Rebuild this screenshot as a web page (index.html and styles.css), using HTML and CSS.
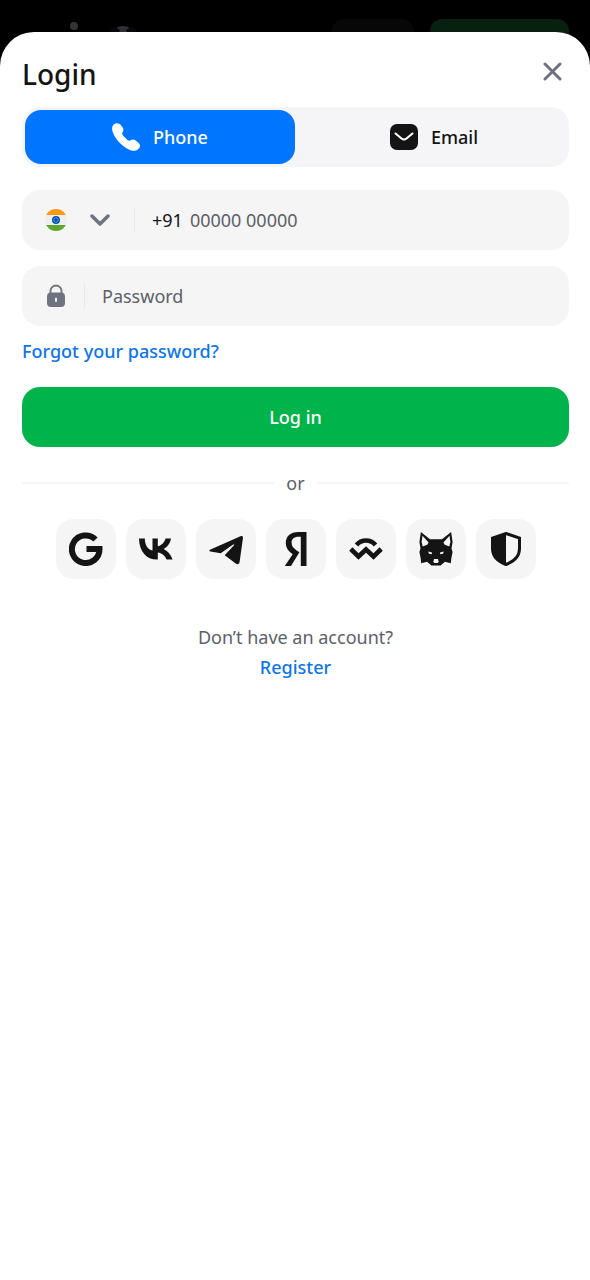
FILE: index.html
```html
<!DOCTYPE html>
<html lang="en">
<head>
<meta charset="utf-8">
<meta name="viewport" content="width=device-width, initial-scale=1">
<title>Login</title>
<link rel="stylesheet" href="styles.css">
</head>
<body>
<div class="topbar" aria-hidden="true">
  <svg class="topbar-logo" width="70" height="34" viewBox="0 0 70 34">
    <circle cx="4" cy="7" r="4" fill="#343434"/>
    <circle cx="53" cy="20" r="13" fill="#303030"/>
    <path d="M40 10l5-2 5 3-2 4h-8zM66 10l-5-2-5 3 2 4h8z" fill="#08080c"/>
  </svg>
  <span class="ghost ghost-dark"></span>
  <span class="ghost ghost-green"></span>
</div>
<main class="sheet">
  <header class="header">
    <h1 class="title">Login</h1>
    <button class="close" type="button" aria-label="Close">
      <svg width="20" height="20" viewBox="0 0 20 20"><path d="M3 3l15 15M18 3L3 18" fill="none" stroke="#6f7380" stroke-width="3" stroke-linecap="round"/></svg>
    </button>
  </header>

  <div class="tabs" role="tablist">
    <button class="tab tab-active" type="button" role="tab" aria-selected="true">
      <svg width="28" height="28" viewBox="0 0 28 28"><path d="M2 1.200C4-.6 7.200 0 8.800 2L10.600 4.600C11.800 6.200 11.600 8 10.500 9.600C9.800 10.600 10.200 11.400 11 12.400L15.500 17C16.500 17.900 17.400 18 18.400 17.400C20 16.300 21.800 16.200 23.300 17.200L26.200 19.400C28.300 21.100 28.600 23.300 27 25.300C24.500 28.400 20.500 28.500 16.800 26.600C9.500 22.600 3.600 16.600.8 9.300C-.4 6.200-.2 3.300 2 1.200Z" fill="#fff"/></svg>
      <span>Phone</span>
    </button>
    <button class="tab" type="button" role="tab" aria-selected="false">
      <svg width="28" height="26" viewBox="0 0 28 26"><rect width="28" height="26" rx="7" fill="#141414"/><path d="M5.500 9.500L11.500 14.500Q14 16.600 16.500 14.500L22.500 9.500" fill="none" stroke="#fff" stroke-width="2" stroke-linecap="round"/></svg>
      <span>Email</span>
    </button>
  </div>

  <form class="form">
    <div class="field">
      <button class="country" type="button" aria-label="Country code: India" aria-haspopup="listbox">
        <svg width="22" height="22" viewBox="0 0 22 22">
          <clipPath id="disc"><circle cx="11" cy="11" r="11"/></clipPath>
          <g clip-path="url(#disc)"><rect width="22" height="22" fill="#eee"/><rect width="22" height="6" fill="#ff9811"/><rect y="16" width="22" height="6" fill="#60a72e"/></g>
          <circle cx="11" cy="11" r="4" fill="#0052b4"/><circle cx="11" cy="11" r="2.200" fill="none" stroke="#dfe8f4" stroke-width=".8" stroke-dasharray="1 .8"/>
        </svg>
        <svg width="20" height="12" viewBox="0 0 20 12"><path d="M2 2l8 8 8-8" fill="none" stroke="#6f7380" stroke-width="3.500" stroke-linecap="round" stroke-linejoin="round"/></svg>
      </button>
      <label class="prefix" for="phone">+91</label>
      <input class="input" id="phone" type="tel" placeholder="00000 00000" aria-label="Phone number">
    </div>
    <div class="field">
      <label class="lock" for="password" aria-label="Password">
        <svg width="20" height="24" viewBox="0 0 20 24"><path d="M4.500 11V7a5.500 5.500 0 0 1 11 0v4" fill="none" stroke="#6f7380" stroke-width="1.800"/><rect x="1" y="8.500" width="18" height="14.500" rx="4" fill="#6f7380"/><rect x="9" y="13.500" width="2" height="4.500" rx="1" fill="#f5f5f5"/></svg>
      </label>
      <input class="input input-password" id="password" type="password" placeholder="Password">
    </div>
    <a class="link forgot" href="#">Forgot your password?</a>
    <button class="submit" type="submit">Log in</button>
  </form>

  <div class="divider"><span>or</span></div>

  <div class="socials">
    <button class="social" type="button" aria-label="Google">
      <svg width="34" height="34" viewBox="0 0 34 34"><path d="M26.500 7.500A13.800 13.800 0 1 0 30.500 17H17.500" fill="none" stroke="#141414" stroke-width="6"/></svg>
    </button>
    <button class="social" type="button" aria-label="VK">
      <svg width="34" height="34" viewBox="0 0 34 34"><path d="M0 6.500H5.800C6 13.500 9 17.600 13.500 18.500V6.500H18.800V14.300C22.300 13.700 25.500 10.400 26.500 6.500H32C31.200 11.600 28.200 15 24.600 17C28.600 18.900 31.800 22.500 33.600 27.500H27.500C26 23.900 22.800 21.100 18.800 20.600V27.500H18C7.500 27.500.3 20.100 0 6.500Z" fill="#141414"/></svg>
    </button>
    <button class="social" type="button" aria-label="Telegram">
      <svg width="34" height="34" viewBox="0 0 34 34"><path d="M1.500 17.600L31.500 4.300C33.200 3.700 34.200 4.500 33.900 6.400L30.600 30C30.200 32.300 28.500 32.700 26.700 31.400L15.700 23.200L25 13.300C25.700 12.400 24.800 12.100 23.800 12.800L11.700 21.200L1.500 19.600C-.1 19.100 0 18.300 1.500 17.600Z" fill="#141414"/></svg>
    </button>
    <button class="social" type="button" aria-label="Yandex">
      <svg width="34" height="34" viewBox="0 0 34 34"><path d="M27.500 34H21.800V4.800H19.500C15 4.800 12.600 7 12.600 10.600C12.600 14.200 14.200 16.100 17.600 18.400L20.400 20.300L12 34H5.800L13.700 22.200C9.200 19 6.800 15.900 6.800 11C6.800 4.300 11.300 0 19.500 0H27.500Z" fill="#141414"/></svg>
    </button>
    <button class="social" type="button" aria-label="WalletConnect">
      <svg width="34" height="34" viewBox="0 0 34 34"><path d="M7.500 13C12.500 7 21.500 7 26.500 13M1.800 17L9.500 24.500L17 17.500L24.500 24.500L32.200 17" fill="none" stroke="#141414" stroke-width="4.600"/></svg>
    </button>
    <button class="social" type="button" aria-label="MetaMask">
      <svg width="34" height="34" viewBox="0 0 34 34"><path d="M1.900 0L11 7.300H23L32.100 0L33.600 10L32.500 16.500L33.600 20L32.300 26.500L31.800 31.300L26 29.800L21.500 33.500H12.500L8 29.800L2.200 31.300L1.700 26.500L.4 20L1.500 16.500L.4 10Z" fill="#141414"/><path d="M3.500 3.800L9.600 10.500L8.200 12.800L3.700 14.500L2.600 10ZM30.500 3.800L24.400 10.500L25.800 12.800L30.300 14.500L31.400 10ZM9.200 19.500L13 20.500L12.700 22.200L10 21.800ZM24.800 19.500L21 20.500L21.300 22.200L24 21.800ZM15 27H19L19.700 30L18.500 31H15.500L14.300 30Z" fill="#f5f5f5"/></svg>
    </button>
    <button class="social" type="button" aria-label="Secure key">
      <svg width="34" height="34" viewBox="0 0 34 34"><path d="M17 1.500L30.500 6V16.500C30.500 24 25 29.500 17 32.500C9 29.500 3.500 24 3.500 16.500V6Z" fill="none" stroke="#141414" stroke-width="3"/><path d="M17 1V33C9 29.500 3 24 3 16.500V5.500Z" fill="#141414"/></svg>
    </button>
  </div>

  <footer class="footer">
    <span>Don’t have an account?</span>
    <a class="link" href="#">Register</a>
  </footer>
</main>
</body>
</html>
```
FILE: styles.css
```css
* { box-sizing: border-box; }

body {
  margin: 0;
  min-height: 100vh;
  display: flex;
  flex-direction: column;
  background: #000;
  color: #141414;
  font: 400 18px/30px "Noto Sans", "Open Sans", sans-serif;
}

button, input {
  margin: 0;
  padding: 0;
  border: 0;
  background: none;
  color: inherit;
  font: inherit;
}

button { cursor: pointer; }
svg { display: block; flex: none; }

.topbar {
  display: flex;
  gap: 16px;
  height: 60px;
  padding: 19px 21px 0 70px;
}
.topbar-logo { margin-right: auto; }
.ghost { height: 36px; border-radius: 12px; }
.ghost-dark { width: 82px; background: #070707; }
.ghost-green { width: 139px; background: #082010; }

.sheet {
  position: relative;
  flex: 1;
  margin-top: -28px;
  padding: 20px 21px 32px 22px;
  border-radius: 34px 34px 0 0;
  background: #fff;
}

.header {
  display: flex;
  justify-content: space-between;
  align-items: flex-start;
  margin-bottom: 11px;
}
.title { margin: 0; font-size: 28px; line-height: 44px; font-weight: 500; }
.close {
  display: grid;
  place-items: center;
  width: 34px;
  height: 38px;
}

.tabs {
  display: grid;
  grid-template-columns: 1fr 1fr;
  gap: 4px;
  height: 60px;
  padding: 3px 0 3px 3px;
  border-radius: 18px;
  background: #f5f5f8;
}
.tab {
  display: flex;
  align-items: center;
  justify-content: center;
  gap: 13px;
  border-radius: 16px;
  font-weight: 500;
}
.tab-active { background: #0075ff; color: #fff; }

.form { display: flex; flex-direction: column; margin-top: 23px; }
.field {
  display: flex;
  align-items: center;
  height: 60px;
  margin-bottom: 16px;
  border-radius: 18px;
  background: #f5f5f5;
}
.country, .lock {
  display: flex;
  align-items: center;
  height: 24px;
  border-right: 1px solid #e8e8ea;
}
.country { gap: 23px; padding: 0 23px; width: 113px; }
.lock { padding-left: 24px; width: 63px; }
.prefix { padding-left: 17px; }
.input { flex: 1; min-width: 0; height: 60px; padding-left: 7px; outline: 0; }
.input-password { padding-left: 17px; }
.input::placeholder { color: #5d6068; opacity: 1; }

.link { color: #0f75e8; font-weight: 500; text-decoration: none; }
.forgot { align-self: flex-start; margin-top: -6px; }
.submit {
  height: 60px;
  margin-top: 21px;
  border-radius: 18px;
  background: #00b34a;
  color: #fff;
  font-weight: 500;
}

.divider {
  display: flex;
  align-items: center;
  gap: 12px;
  margin: 21px 0;
  color: #5d6068;
}
.divider::before, .divider::after {
  content: "";
  flex: 1;
  height: 2px;
  background: #f5f5f6;
}

.socials { display: flex; justify-content: center; gap: 10px; }
.social {
  display: grid;
  place-items: center;
  width: 60px;
  height: 60px;
  border-radius: 18px;
  background: #f5f5f5;
}

.footer {
  display: flex;
  flex-direction: column;
  align-items: center;
  margin-top: 43px;
  color: #5d6068;
}
```
